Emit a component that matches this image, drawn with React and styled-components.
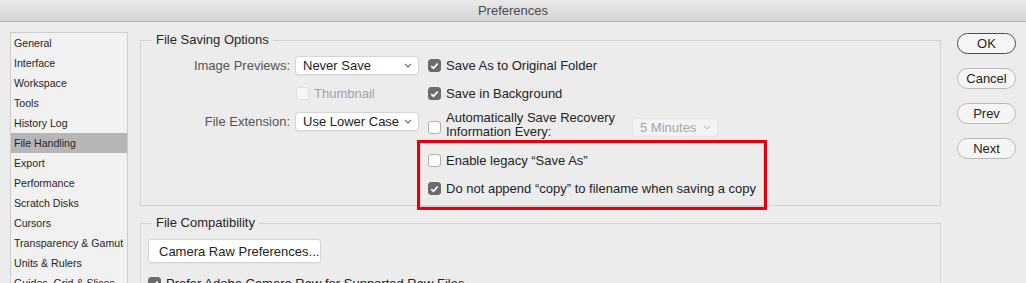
import React from 'react'
import styled, { createGlobalStyle } from 'styled-components'

const GlobalStyle = createGlobalStyle`
  html, body {
    margin: 0;
    padding: 0;
    background: #ececec;
    overflow: hidden;
  }
  body {
    font-family: "Liberation Sans", Arial, sans-serif;
    font-size: 13px;
    color: #242424;
  }
`

const Window = styled.div`
  width: 1026px;
  height: 283px;
  background: #ececec;
  overflow: hidden;
`

const TitleBar = styled.div`
  height: 21px;
  border-bottom: 1px solid #b4b4b4;
  background: linear-gradient(#e9e9e9, #d5d5d5);
  display: flex;
  align-items: center;
  justify-content: center;
  color: #4b4b4b;
  font-size: 13px;
`

const Body = styled.div`
  display: flex;
  align-items: flex-start;
  padding-left: 10px;
`

const Sidebar = styled.ul`
  list-style: none;
  margin: 10px 0 0 0;
  padding: 0;
  width: 116px;
  height: 260px;
  background: #f1f1f1;
  border: 1px solid #cdcdcd;
  border-bottom: none;
`

const SideItem = styled.li`
  height: 20px;
  line-height: 20px;
  padding-left: 3px;
  font-size: 10.6px;
  color: #262626;
  white-space: nowrap;
  background: ${(props) => (props.$active ? '#b6b6b6' : 'transparent')};
`

const Main = styled.div`
  margin-left: 12px;
  padding-top: 10px;
  width: 801px;
  display: flex;
  flex-direction: column;
  gap: 9px;
`

const Group = styled.fieldset`
  margin: 0;
  padding: 0;
  min-width: 0;
  border: 1px solid #d2d2d2;
  ${(props) => props.$open && 'border-bottom: none; height: 80px;'}
`

const Legend = styled.legend`
  margin-left: 11px;
  padding: 0 4px;
  font-size: 13px;
  line-height: 16px;
  color: #262626;
`

const Grid = styled.div`
  display: grid;
  grid-template-columns: 149px 124px 1fr;
  grid-template-rows: 19px 21px auto auto;
  column-gap: 5px;
  row-gap: 8px;
  margin-top: 8px;
  align-items: center;
`

const Label = styled.div`
  text-align: right;
  color: #555;
  white-space: nowrap;
  align-self: ${(props) => (props.$top ? 'start' : 'center')};
  line-height: 19px;
`

const SelectBox = styled.div`
  height: 19px;
  box-sizing: border-box;
  display: flex;
  align-items: center;
  justify-content: space-between;
  padding: 0 6px 0 7px;
  background: ${(props) => (props.$disabled ? '#f3f3f3' : '#fff')};
  color: ${(props) => (props.$disabled ? '#a6a6a6' : '#242424')};
  border: 1px solid ${(props) => (props.$disabled ? '#e6e6e6' : '#d6d6d6')};
  border-radius: 4px;
  box-shadow: ${(props) => (props.$disabled ? 'none' : '0 1px 1px rgba(0,0,0,0.06)')};
  width: ${(props) => props.$width || 'auto'};
  margin: ${(props) => props.$margin || '0'};
  align-self: ${(props) => (props.$top ? 'start' : 'center')};
  flex: none;
  white-space: nowrap;
`

const Chevron = ({ color = '#6f6f6f' }) => (
  <svg width="8" height="5" viewBox="0 0 8 5">
    <path d="M1 1 L4 4 L7 1" fill="none" stroke={color} strokeWidth="1.1" />
  </svg>
)

const Select = ({ value, disabled, width, margin, top }) => (
  <SelectBox $disabled={disabled} $width={width} $margin={margin} $top={top}>
    <span>{value}</span>
    <Chevron color={disabled ? '#c4c4c4' : '#6f6f6f'} />
  </SelectBox>
)

const Box = styled.span`
  flex: none;
  width: 13px;
  height: 13px;
  box-sizing: border-box;
  border-radius: 3px;
  display: inline-flex;
  align-items: center;
  justify-content: center;
  background: ${(props) => (props.$checked ? '#6c6c6c' : props.$disabled ? '#f6f6f6' : '#fff')};
  border: 1px solid ${(props) => (props.$checked ? '#6c6c6c' : props.$disabled ? '#dedede' : '#aeaeae')};
  margin-top: ${(props) => props.$offset || 0}px;
`

const Check = styled.label`
  display: flex;
  align-items: ${(props) => (props.$top ? 'flex-start' : 'center')};
  gap: 5px;
  color: ${(props) => (props.$disabled ? '#a3a3a3' : '#242424')};
  white-space: nowrap;
  margin-left: ${(props) => props.$indent || 0}px;
`

const Checkbox = ({ checked, disabled, offset, top, children, indent }) => (
  <Check $disabled={disabled} $indent={indent} $top={top}>
    <Box $checked={checked} $disabled={disabled} $offset={offset}>
      {checked && (
        <svg width="9" height="8" viewBox="0 0 9 8">
          <path d="M1.3 4.2 L3.5 6.3 L7.7 1.5" fill="none" stroke="#fff" strokeWidth="1.8" />
        </svg>
      )}
    </Box>
    {children}
  </Check>
)

const RightCell = styled.div`
  padding-left: 4px;
  display: flex;
  align-items: ${(props) => (props.$top ? 'flex-start' : 'center')};
  align-self: ${(props) => (props.$top ? 'start' : 'center')};
  margin-top: ${(props) => (props.$top ? '-1px' : '0')};
`

const TwoLine = styled.div`
  width: 180px;
  line-height: 14px;
  white-space: normal;
`

const Highlight = styled.div`
  grid-column: 3;
  margin: -7px 0 -5px -7px;
  width: 350px;
  height: 70px;
  box-sizing: border-box;
  border: 3px solid #e3000f;
  position: relative;
`

const HighlightInner = styled.div`
  height: 100%;
  box-sizing: border-box;
  border: 1px solid #cfcfcf;
  padding: 9px 0 0 7px;
  display: flex;
  flex-direction: column;
  gap: 13px;
`

const CompatBody = styled.div`
  padding: 8px 0 0 7px;
  display: flex;
  flex-direction: column;
  gap: 13px;
`

const PlainButton = styled.div`
  align-self: flex-start;
  width: 173px;
  height: 24px;
  box-sizing: border-box;
  display: flex;
  align-items: center;
  padding-left: 10px;
  background: #fff;
  border: 1px solid #d6d6d6;
  border-radius: 3px;
  box-shadow: 0 1px 1px rgba(0,0,0,0.05);
  white-space: nowrap;
`

const Buttons = styled.div`
  margin-left: 16px;
  padding-top: 11px;
  display: flex;
  flex-direction: column;
  gap: 14px;
`

const PillButton = styled.div`
  width: 59px;
  height: 21px;
  box-sizing: border-box;
  border-radius: 11px;
  border: ${(props) => (props.$primary ? '1.5px solid #4d4d4d' : '1px solid #b9b9b9')};
  background: #f5f5f5;
  display: flex;
  align-items: center;
  justify-content: center;
  color: #242424;
`

const sideItems = [
  'General',
  'Interface',
  'Workspace',
  'Tools',
  'History Log',
  'File Handling',
  'Export',
  'Performance',
  'Scratch Disks',
  'Cursors',
  'Transparency & Gamut',
  'Units & Rulers',
  'Guides, Grid & Slices',
]

export default function App() {
  return (
    <Window>
      <GlobalStyle />
      <TitleBar>Preferences</TitleBar>
      <Body>
        <Sidebar>
          {sideItems.map((item) => (
            <SideItem key={item} $active={item === 'File Handling'}>
              {item}
            </SideItem>
          ))}
        </Sidebar>

        <Main>
          <Group>
            <Legend>File Saving Options</Legend>
            <Grid>
              <Label>Image Previews:</Label>
              <Select value="Never Save" />
              <RightCell>
                <Checkbox checked>Save As to Original Folder</Checkbox>
              </RightCell>

              <div />
              <Checkbox disabled indent={1}>Thumbnail</Checkbox>
              <RightCell>
                <Checkbox checked>Save in Background</Checkbox>
              </RightCell>

              <Label $top>File Extension:</Label>
              <Select value="Use Lower Case" top />
              <RightCell $top>
                <Checkbox top offset={10}>
                  <TwoLine>Automatically Save Recovery Information Every:</TwoLine>
                </Checkbox>
                <Select value="5 Minutes" disabled width="86px" margin="5px 0 0 6px" />
              </RightCell>

              <Highlight>
                <HighlightInner>
                  <Checkbox>Enable legacy “Save As”</Checkbox>
                  <Checkbox checked>Do not append “copy” to filename when saving a copy</Checkbox>
                </HighlightInner>
              </Highlight>
            </Grid>
          </Group>

          <Group $open>
            <Legend>File Compatibility</Legend>
            <CompatBody>
              <PlainButton>Camera Raw Preferences...</PlainButton>
              <Checkbox checked>Prefer Adobe Camera Raw for Supported Raw Files</Checkbox>
            </CompatBody>
          </Group>
        </Main>

        <Buttons>
          <PillButton $primary>OK</PillButton>
          <PillButton>Cancel</PillButton>
          <PillButton>Prev</PillButton>
          <PillButton>Next</PillButton>
        </Buttons>
      </Body>
    </Window>
  )
}
